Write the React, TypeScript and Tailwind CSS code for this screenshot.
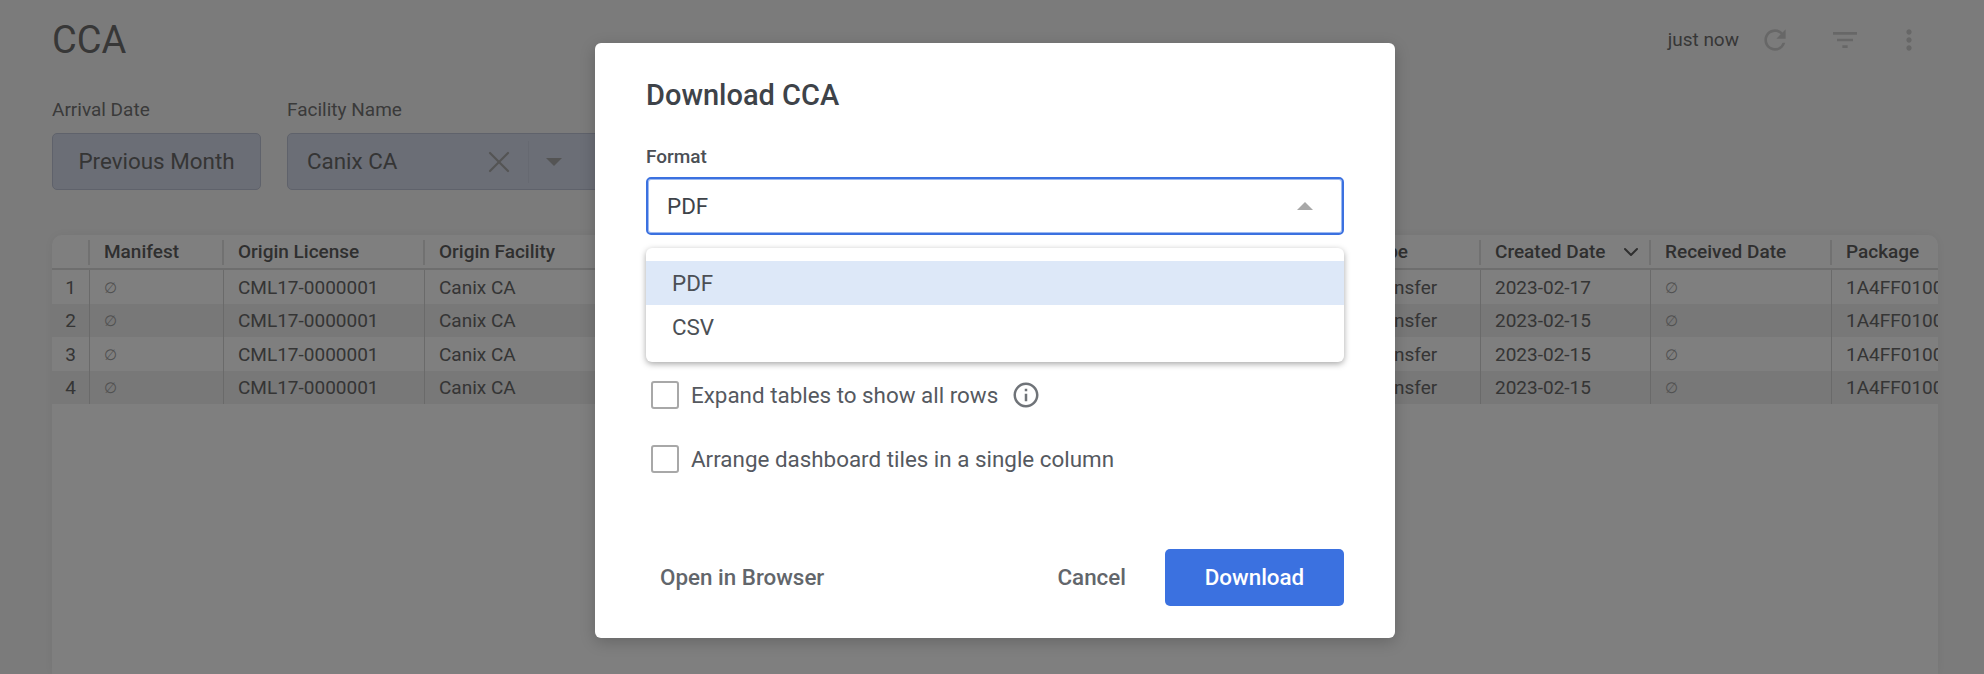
import { ChevronDown, X } from "lucide-react";
import { MdFilterList, MdInfoOutline, MdMoreVert, MdRefresh } from "react-icons/md";

const columns = [
  { name: "", width: "w-[38px]" },
  { name: "Manifest", width: "w-[134px]" },
  { name: "Origin License", width: "w-[201px]" },
  { name: "Origin Facility", width: "w-[928px]" },
  { name: "Type", width: "w-[128px]" },
  { name: "Created Date", width: "w-[170px]", sorted: true },
  { name: "Received Date", width: "w-[181px]" },
  { name: "Package", width: "w-[160px]" },
];

const rows = [
  { n: "1", created: "2023-02-17" },
  { n: "2", created: "2023-02-15" },
  { n: "3", created: "2023-02-15" },
  { n: "4", created: "2023-02-15" },
];

const Empty = () => <span className="text-[15px] text-[#a3a3a3]">∅</span>;

const Cell = ({ width, children, index }: { width: string; children: React.ReactNode; index?: boolean }) => (
  <div
    className={`${width} shrink-0 h-full pt-[2px] flex items-center overflow-hidden whitespace-nowrap border-r border-[#d4d4d4] last:border-r-0 ${
      index ? "justify-center" : "pl-[14px]"
    }`}
  >
    {children}
  </div>
);

const Checkbox = ({ label, info }: { label: string; info?: boolean }) => (
  <div className="flex items-center h-[28px] ml-[5px]">
    <div className="w-[28px] h-[28px] rounded-[3px] border-2 border-[#a8a8a8]"></div>
    <span className="ml-[12px] pt-[2px] text-[22.4px] text-[#55595f]">{label}</span>
    {info && <MdInfoOutline className="ml-[13px] text-[#6f7378]" size={30} />}
  </div>
);

const App = () => {
  return (
    <div className="relative h-screen overflow-hidden bg-[#f7f7f7] font-['Roboto',sans-serif]">
      <div className="h-full flex flex-col">
        <div className="h-[80px] flex items-center justify-between pl-[52px] pr-[59px]">
          <h1 className="text-[38px] text-[#6f6f6f] font-normal">CCA</h1>
          <div className="flex items-center text-[#cfcfcf]">
            <span className="text-[19px] text-[#6f6f6f]">just now</span>
            <MdRefresh className="ml-[20px]" size={32} />
            <MdFilterList className="ml-[38px]" size={32} />
            <MdMoreVert className="ml-[32px]" size={32} />
          </div>
        </div>

        <div className="flex pl-[52px] gap-[26px] mt-[20px]">
          <div>
            <div className="h-[20px] leading-[20px] text-[19px] text-[#757575]">Arrival Date</div>
            <div className="mt-[13px] h-[57px] w-[209px] flex items-center justify-center rounded-[5px] border border-[#bfc5d6] bg-[#d7dcec] text-[22.4px] text-[#6b6b6b]">
              Previous Month
            </div>
          </div>
          <div>
            <div className="h-[20px] leading-[20px] text-[19px] text-[#757575]">Facility Name</div>
            <div className="mt-[13px] h-[57px] w-[330px] flex items-center rounded-[5px] border border-[#bfc5d6] bg-[#d7dcec] text-[22.4px] text-[#6b6b6b] pl-[19px]">
              <span className="w-[174px]">Canix CA</span>
              <X className="text-[#a9a9a9]" size={36} strokeWidth={1.5} />
              <div className="ml-[11px] w-px h-[42px] bg-[#cdd2e2]"></div>
              <div className="ml-[17px] w-0 h-0 border-x-[8px] border-x-transparent border-t-[8px] border-t-[#a8a8a8]"></div>
            </div>
          </div>
        </div>

        <div className="mt-[45px] ml-[52px] mr-[46px] flex-1 rounded-t-[10px] bg-white shadow-[0_0_12px_rgba(0,0,0,0.06)] overflow-hidden">
          <div className="h-[35px] pt-[1px] flex items-center border-b-2 border-[#dcdcdc] text-[19px] font-medium text-[#5f5f5f]">
            {columns.map((c) => (
              <div key={c.name} className={`${c.width} shrink-0 h-[25px] flex items-center justify-between pl-[14px] pr-[6px] whitespace-nowrap border-r-2 border-[#e3e3e3] last:border-r-0`}>
                {c.name}
                {c.sorted && <ChevronDown className="text-[#5f5f5f]" size={24} />}
              </div>
            ))}
          </div>
          {rows.map((r, i) => (
            <div key={r.n} className={`h-[33.5px] flex items-center text-[19px] text-[#6a6a6a] ${i % 2 === 1 ? "bg-[#f0f0f0]" : ""}`}>
              <Cell width="w-[38px]" index>{r.n}</Cell>
              <Cell width="w-[134px]"><Empty /></Cell>
              <Cell width="w-[201px]">CML17-0000001</Cell>
              <Cell width="w-[928px]">Canix CA</Cell>
              <Cell width="w-[128px]">Transfer</Cell>
              <Cell width="w-[170px]">{r.created}</Cell>
              <Cell width="w-[181px]"><Empty /></Cell>
              <Cell width="w-[160px]">1A4FF0100000022000000123</Cell>
            </div>
          ))}
        </div>
      </div>

      {/* dimmed backdrop + modal */}
      <div className="absolute inset-0 bg-black/50 flex justify-center items-start pl-[6px]">
        <div className="mt-[43px] w-[800px] rounded-[6px] bg-white px-[51px] pt-[34px] pb-[32px] shadow-[0_4px_16px_rgba(0,0,0,0.2)]">
          <h2 className="h-[36px] leading-[36px] text-[29px] font-medium text-[#3e4349]">Download CCA</h2>
          <div className="mt-[34px] h-[20px] leading-[20px] text-[19px] font-medium text-[#4b4f55]">Format</div>
          <div className="relative mt-[10px]">
            <div className="h-[58px] flex items-center justify-between rounded-[5px] border-2 border-[#3b71e0] shadow-[inset_0_0_0_1px_#9db9f0] pl-[19px] pr-[29px] text-[22.4px] text-[#3e4349]">
              <span className="pt-[2px]">PDF</span>
              <div className="w-0 h-0 border-x-[8px] border-x-transparent border-b-[8px] border-b-[#a8a8a8]"></div>
            </div>
            <div className="absolute top-[71px] left-0 right-0 py-[13px] rounded-[6px] bg-white shadow-[0_2px_6px_rgba(0,0,0,0.35)] text-[22.4px] text-[#4b4f55]">
              <div className="h-[44px] flex items-center pl-[26px] pt-[2px] bg-[#dde8f8]">PDF</div>
              <div className="h-[44px] flex items-center pl-[26px] pt-[2px]">CSV</div>
            </div>
          </div>
          <div className="mt-[146px] flex flex-col gap-[36px]">
            <Checkbox label="Expand tables to show all rows" info />
            <Checkbox label="Arrange dashboard tiles in a single column" />
          </div>
          <div className="mt-[76px] flex items-center text-[22.4px] font-medium text-[#62666b]">
            <button className="ml-[14px]">Open in Browser</button>
            <button className="ml-auto mr-[39px]">Cancel</button>
            <button className="w-[179px] h-[57px] rounded-[5px] bg-[#3b71e0] text-white">Download</button>
          </div>
        </div>
      </div>
    </div>
  );
};

export default App;
